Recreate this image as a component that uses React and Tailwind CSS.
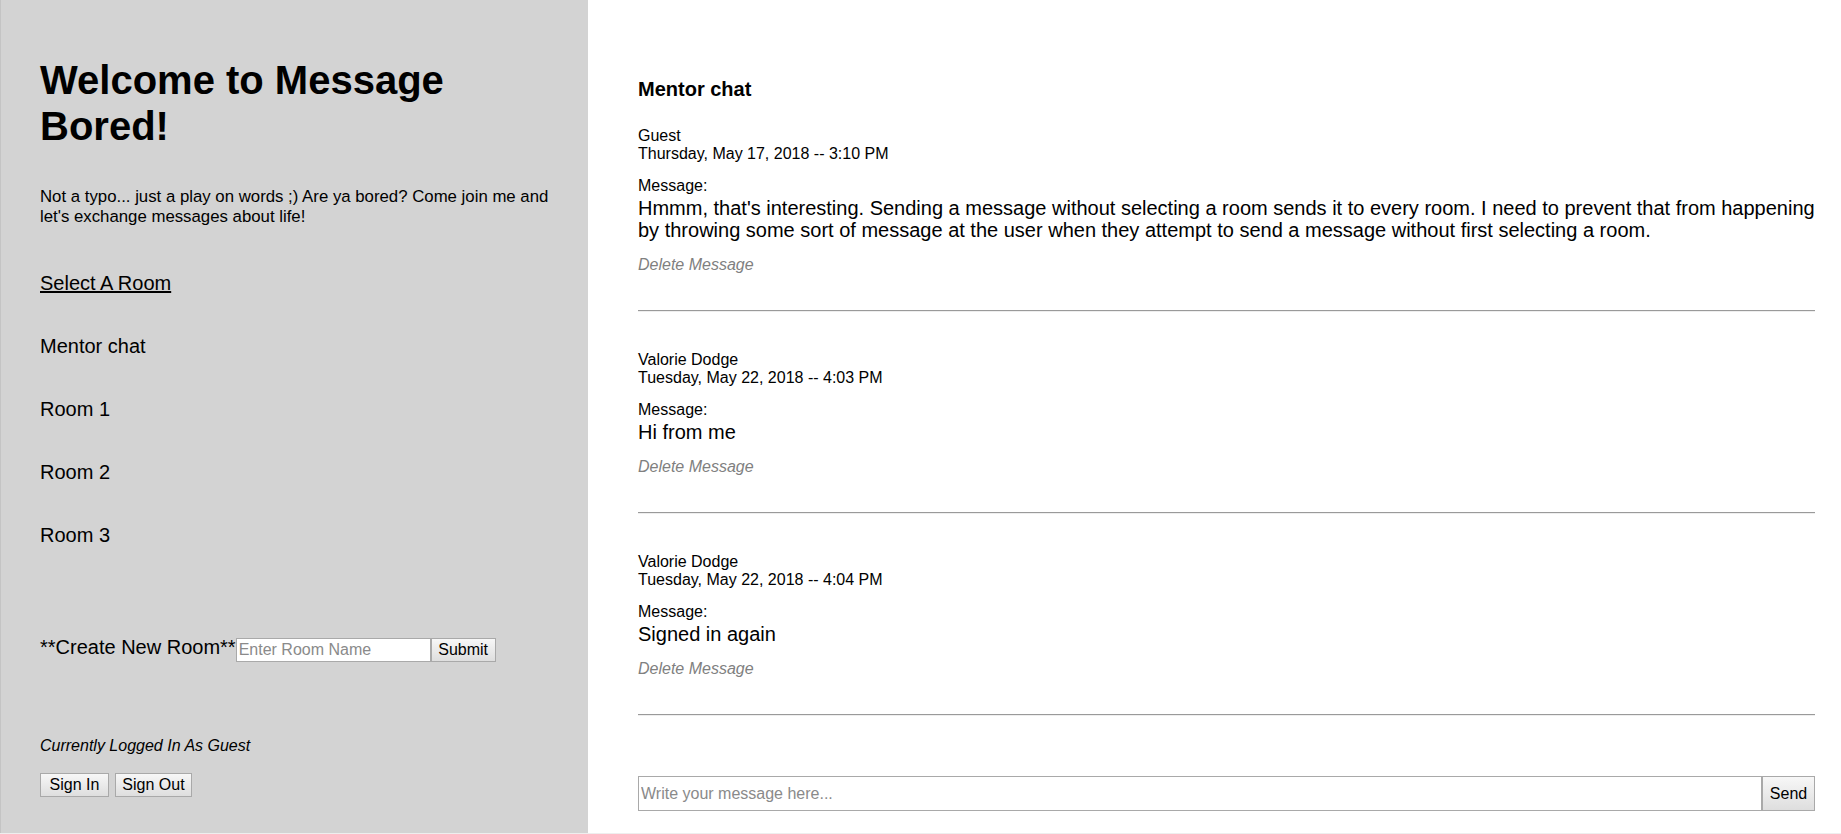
const rooms = ["Mentor chat", "Room 1", "Room 2", "Room 3"];

const messages = [
  {
    name: "Guest",
    date: "Thursday, May 17, 2018 -- 3:10 PM",
    text: "Hmmm, that's interesting. Sending a message without selecting a room sends it to every room. I need to prevent that from happening by throwing some sort of message at the user when they attempt to send a message without first selecting a room.",
  },
  { name: "Valorie Dodge", date: "Tuesday, May 22, 2018 -- 4:03 PM", text: "Hi from me" },
  { name: "Valorie Dodge", date: "Tuesday, May 22, 2018 -- 4:04 PM", text: "Signed in again" },
];

const btn =
  "border border-[#a9a9a9] bg-linear-to-b from-[#f7f7f7] to-[#dedede] px-[6px] text-[16px] leading-[18px] text-black";

function Message({ name, date, text, first }) {
  return (
    <div className={first ? "mt-[26px]" : "mt-[39px]"}>
      <p className="text-[16px] leading-[18px]">{name}</p>
      <p className="text-[16px] leading-[18px]">{date}</p>
      <p className="mt-[14px] text-[16px] leading-[18px]">Message:</p>
      <p className="mt-[2px] text-[20px] leading-[22px]">{text}</p>
      <p className="mt-[15px] text-[16px] leading-[18px] italic text-[#808080]">Delete Message</p>
      <div className="mt-[36px] h-0 border-t border-b border-t-[#9a9a9a] border-b-[#eeeeee]" />
    </div>
  );
}

export default function App() {
  return (
    <div className="flex h-[834px] w-full border-b border-[#eeeeee] font-['Liberation_Sans',Arial,sans-serif] text-black">
      <aside className="flex h-full w-[588px] shrink-0 flex-col border-l border-[#c4c4c4] bg-[#d3d3d3] pl-[39px] pr-[30px]">
        <h1 className="mt-[57px] text-[40px] leading-[46px] font-bold">Welcome to Message Bored!</h1>
        <p className="mt-[38px] text-[16.8px] leading-[20px]">
          Not a typo... just a play on words ;) Are ya bored? Come join me and let's exchange messages about life!
        </p>
        <a className="mt-[45px] text-[20px] leading-[23px] underline">Select A Room</a>
        {rooms.map((r) => (
          <div key={r} className="mt-[40px] text-[20px] leading-[23px]">
            {r}
          </div>
        ))}
        <div className="mt-[89px] flex items-start">
          <span className="text-[20px] leading-[23px]">**Create New Room**</span>
          <input
            placeholder="Enter Room Name"
            className="mt-[2px] h-[24px] w-[195px] border border-[#a9a9a9] bg-white px-[2px] text-[16px] placeholder:text-[#8a8a8a]"
          />
          <button className={`${btn} mt-[2px] h-[24px] w-[65px]`}>Submit</button>
        </div>
        <p className="mt-[75px] text-[16px] leading-[18px] italic">Currently Logged In As Guest</p>
        <div className="mt-[18px] flex gap-[6px]">
          <button className={`${btn} h-[24px] w-[69px]`}>Sign In</button>
          <button className={`${btn} h-[24px] w-[77px]`}>Sign Out</button>
        </div>
      </aside>

      <main className="flex-1 bg-white pl-[50px] pr-[26px] pt-[78px]">
        <h2 className="text-[20px] leading-[23px] font-bold">Mentor chat</h2>
        {messages.map((m, i) => (
          <Message key={i} {...m} first={i === 0} />
        ))}
        <form className="mt-[60px] flex h-[35px]" onSubmit={(e) => e.preventDefault()}>
          <input
            placeholder="Write your message here..."
            className="h-full flex-1 border border-[#a9a9a9] px-[2px] text-[16px] placeholder:text-[#8a8a8a]"
          />
          <button className={`${btn} h-full w-[53px]`}>Send</button>
        </form>
      </main>
    </div>
  );
}
